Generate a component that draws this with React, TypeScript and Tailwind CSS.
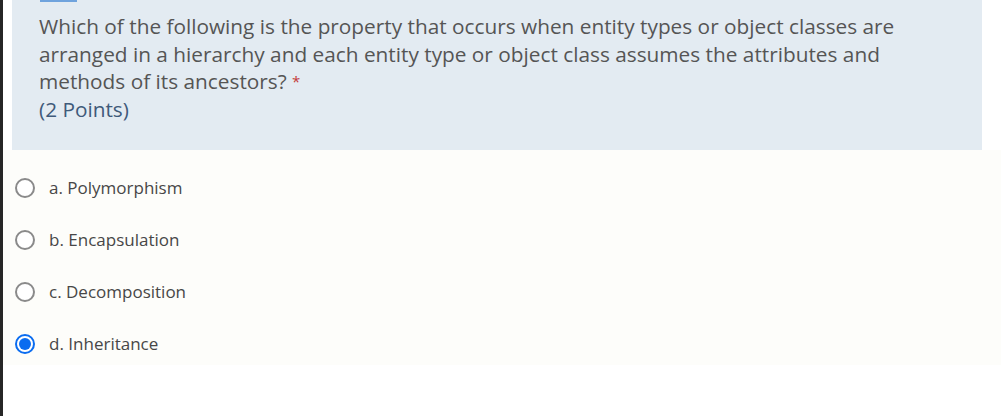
const options = [
  { label: 'a. Polymorphism', checked: false },
  { label: 'b. Encapsulation', checked: false },
  { label: 'c. Decomposition', checked: false },
  { label: 'd. Inheritance', checked: true },
];

function Radio({ checked }: { checked: boolean }) {
  if (checked) {
    return (
      <span className="flex h-[20px] w-[20px] shrink-0 items-center justify-center rounded-full border-2 border-[#0a6cf0] bg-white">
        <span className="h-[12px] w-[12px] rounded-full bg-[#0a6cf0]" />
      </span>
    );
  }
  return <span className="h-[20px] w-[20px] shrink-0 rounded-full border-2 border-[#8a8a8a] bg-white" />;
}

export default function App() {
  return (
    <div className="flex h-[416px] w-[1001px] bg-white font-['Open_Sans',sans-serif]">
      <div className="w-[3px] shrink-0 bg-[#262626]" />
      <div className="flex flex-1 flex-col">
        <div className="ml-[9px] mr-[19px] h-[150px] bg-[#e3ebf2] pl-[27px]">
          <div className="ml-[1px] h-[2px] w-[37px] bg-[#6fa3dd]" />
          <div className="pt-[11px] text-[20.8px] leading-[27.5px] whitespace-nowrap text-[#555555]">
            <p>Which of the following is the property that occurs when entity types or object classes are</p>
            <p>arranged in a hierarchy and each entity type or object class assumes the attributes and</p>
            <p>
              methods of its ancestors? <span className="text-[15px] align-top text-[#c43a3a]">*</span>
            </p>
            <p className="text-[#3f5a7a]">(2 Points)</p>
          </div>
        </div>
        <div className="flex h-[215px] flex-col bg-[#fdfdfa] pt-[27px]">
          {options.map((o) => (
            <div key={o.label} className="mb-[31px] flex h-[21px] items-center gap-[14px] pl-[12px]">
              <Radio checked={o.checked} />
              <span className="text-[17px] text-[#474747]">{o.label}</span>
            </div>
          ))}
        </div>
      </div>
    </div>
  );
}
